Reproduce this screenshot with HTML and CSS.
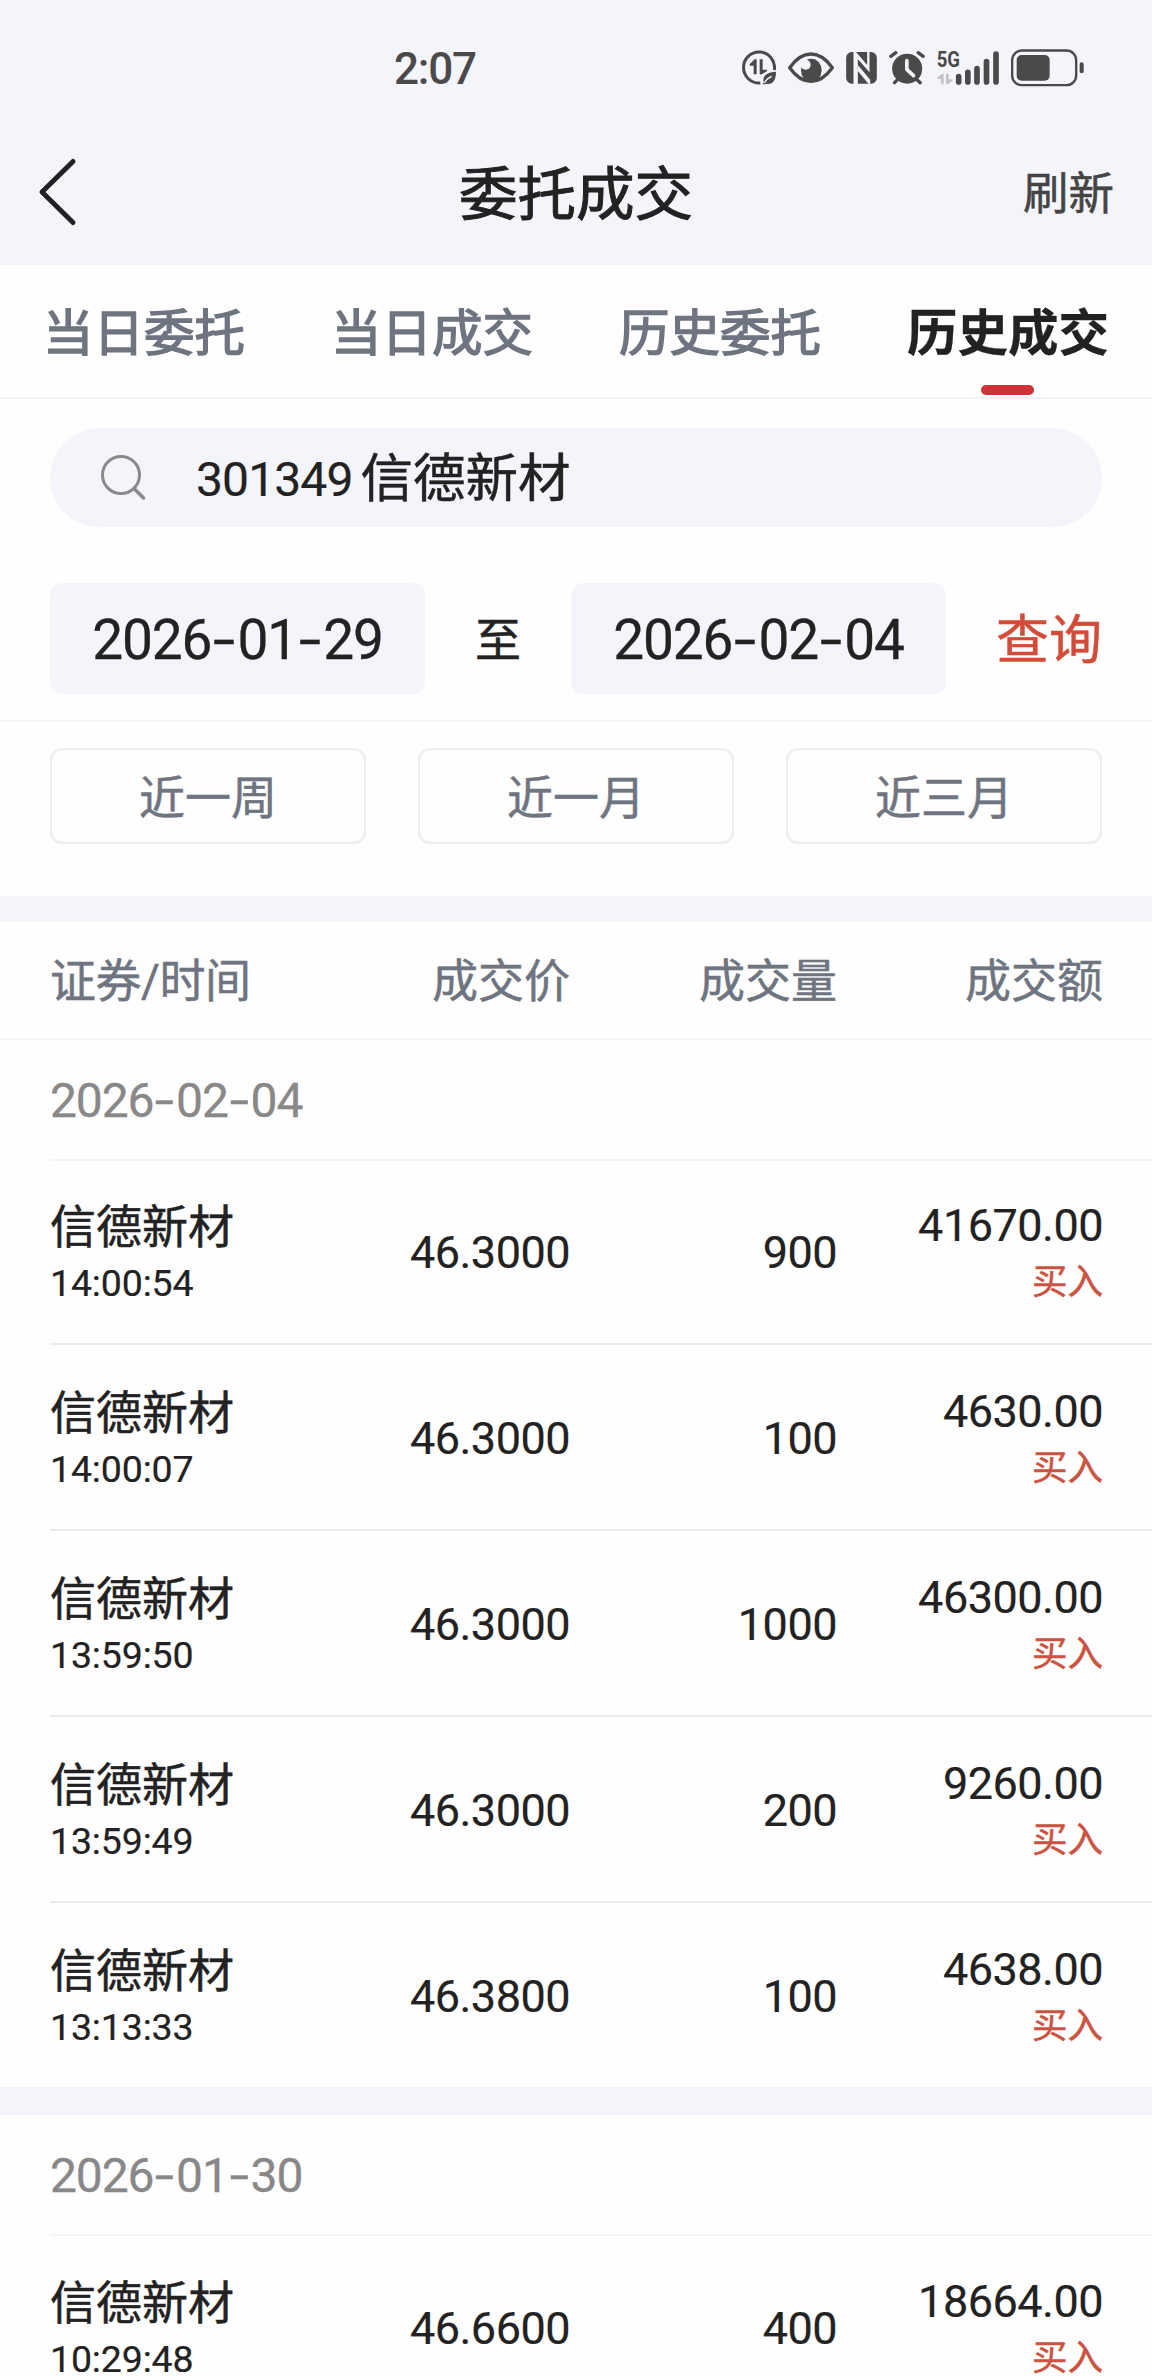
FILE: index.html
```html
<!DOCTYPE html>
<html lang="zh-CN">
<head>
<meta charset="utf-8">
<title>委托成交</title>
<link rel="stylesheet" href="styles.css">
</head>
<body>
<div class="page">
  <header class="top">
    <div class="status">
      <span class="clock">2:07</span>
      <div class="status-icons">
        <svg width="34" height="42" viewBox="66 50 102 126">
          <path d="M163 119A46.500 46.500 0 1 0 121 158" fill="none" stroke="#4a4a4a" stroke-width="9"/>
          <path d="M110 87V132H101V106H89V102L104 87zM119 87H128V118H141V122L126 132H119z" fill="#4a4a4a"/>
          <path d="M168 124c-24 1-38 10-38 25 0 3 1 5 2 7l-5 6h8l3-2c18 4 30-7 30-36z" fill="#4a4a4a"/>
          <path d="M133 158c6-11 13-16 22-20" fill="none" stroke="#f4f5fa" stroke-width="4"/>
        </svg>
        <svg class="eye" width="46" height="42" viewBox="204 50 138 126">
          <path d="M209 112C229 84 250 71 273 71s44 13 64 41c-20 28-41 41-64 41s-44-13-64-41z" fill="none" stroke="#4a4a4a" stroke-width="10" stroke-linejoin="round"/>
          <ellipse cx="274" cy="120" rx="31" ry="35" fill="#4a4a4a"/>
          <circle cx="257" cy="103" r="15" fill="#f4f5fa"/>
        </svg>
        <svg class="nfc" width="31" height="42" viewBox="378 50 92 126">
          <rect x="378" y="65" width="92" height="95" rx="17" fill="#4a4a4a"/>
          <path d="M397 62H405L441 104V62H448V126L413 86V161H400V64z" fill="#f4f5fa"/>
          <path d="M413 104L450 148V162H446L413 122z" fill="#f4f5fa"/>
        </svg>
        <svg class="alarm" width="36" height="42" viewBox="507 50 107 126">
          <circle cx="561" cy="115" r="45" fill="#4a4a4a"/>
          <path d="M512 78L527 67M594 67L609 78M523 157L533 147M589 147L600 157" stroke="#4a4a4a" stroke-width="10" stroke-linecap="round"/>
          <path d="M560 91V117L580 136" fill="none" stroke="#f4f5fa" stroke-width="11" stroke-linecap="round" stroke-linejoin="round"/>
        </svg>
        <svg class="signal" width="62" height="42" viewBox="651 50 186 126">
          <text x="650" y="111" class="net" textLength="70" lengthAdjust="spacingAndGlyphs">5G</text>
          <path d="M671 130V162H663V146H652V142L666 130zM678 130H686V147H697V151L684 162H678z" fill="#c2c3c7"/>
          <path d="M716 139V155M743.500 126V155M771 115V155M799.500 94V155M828 71V155" stroke="#4a4a4a" stroke-width="17" stroke-linecap="round"/>
        </svg>
        <svg class="battery" width="73" height="42" viewBox="873 50 219 126">
          <rect x="876.500" y="60.500" width="192" height="104" rx="29" fill="none" stroke="#4a4a4a" stroke-width="7"/>
          <rect x="890" y="74" width="99" height="77" rx="15" fill="#4a4a4a"/>
          <path d="M1085 102V123" stroke="#4a4a4a" stroke-width="12" stroke-linecap="round"/>
        </svg>
      </div>
    </div>
    <div class="nav">
      <svg class="back" width="42" height="72" viewBox="0 0 42 72"><path d="M37 5.500L6 36L37 66.500" fill="none" stroke="#222" stroke-width="5" stroke-linecap="round" stroke-linejoin="round"/></svg>
      <h1 class="title">委托成交</h1>
      <span class="refresh">刷新</span>
    </div>
  </header>

  <nav class="tabs">
    <span class="tab">当日委托</span>
    <span class="tab">当日成交</span>
    <span class="tab">历史委托</span>
    <span class="tab active">历史成交</span>
  </nav>

  <div class="filters">
    <div class="search">
      <svg width="48" height="48" viewBox="0 0 48 48"><circle cx="22" cy="22" r="18.500" fill="none" stroke="#8a8a8a" stroke-width="3"/><path d="M35 35.500L44.500 45" stroke="#8a8a8a" stroke-width="3.500" stroke-linecap="round"/></svg>
      <span class="code">301349</span><span class="name">信德新材</span>
    </div>
    <div class="range">
      <span class="date">2026<i>-</i>01<i>-</i>29</span>
      <span class="to">至</span>
      <span class="date">2026<i>-</i>02<i>-</i>04</span>
      <span class="query">查询</span>
    </div>
  </div>

  <div class="quick">
    <span class="chip">近一周</span>
    <span class="chip">近一月</span>
    <span class="chip">近三月</span>
  </div>

  <div class="columns cells">
    <span class="first">证券/时间</span><span>成交价</span><span>成交量</span><span>成交额</span>
  </div>

  <section class="group">
    <h2 class="day">2026<i>-</i>02<i>-</i>04</h2>
    <div class="row cells">
      <div class="first"><span class="stock">信德新材</span><span class="time">14:00:54</span></div>
      <span class="num">46.3000</span><span class="num">900</span>
      <div class="last"><span class="amount">41670.00</span><span class="side">买入</span></div>
    </div>
    <div class="row cells">
      <div class="first"><span class="stock">信德新材</span><span class="time">14:00:07</span></div>
      <span class="num">46.3000</span><span class="num">100</span>
      <div class="last"><span class="amount">4630.00</span><span class="side">买入</span></div>
    </div>
    <div class="row cells">
      <div class="first"><span class="stock">信德新材</span><span class="time">13:59:50</span></div>
      <span class="num">46.3000</span><span class="num">1000</span>
      <div class="last"><span class="amount">46300.00</span><span class="side">买入</span></div>
    </div>
    <div class="row cells">
      <div class="first"><span class="stock">信德新材</span><span class="time">13:59:49</span></div>
      <span class="num">46.3000</span><span class="num">200</span>
      <div class="last"><span class="amount">9260.00</span><span class="side">买入</span></div>
    </div>
    <div class="row cells">
      <div class="first"><span class="stock">信德新材</span><span class="time">13:13:33</span></div>
      <span class="num">46.3800</span><span class="num">100</span>
      <div class="last"><span class="amount">4638.00</span><span class="side">买入</span></div>
    </div>
  </section>

  <section class="group">
    <h2 class="day">2026<i>-</i>01<i>-</i>30</h2>
    <div class="row cells">
      <div class="first"><span class="stock">信德新材</span><span class="time">10:29:48</span></div>
      <span class="num">46.6600</span><span class="num">400</span>
      <div class="last"><span class="amount">18664.00</span><span class="side">买入</span></div>
    </div>
  </section>
</div>
</body>
</html>
```
FILE: styles.css
```css
* { box-sizing: border-box; }
body {
  margin: 0;
  background: #fefefe;
  color: #222;
  font-family: Roboto, "Noto Sans CJK SC", sans-serif;
  -webkit-text-stroke: 0.500px;
}
i { font-style: normal; }
h1, h2 { margin: 0; font-weight: 400; }
svg { display: block; flex: none; }
.page {
  width: 1152px;
  height: 2376px;
  overflow: hidden;
}

/* status bar and title */
.top { height: 265px; background: #f4f5fa; }
.status {
  height: 136px;
  padding: 0 68px 0 394px;
  display: flex;
  align-items: center;
  justify-content: space-between;
}
.clock {
  padding-top: 2px;
  font-size: 44px;
  line-height: 54px;
  letter-spacing: -1.200px;
  font-weight: 500;
  color: #4a4a4a;
  -webkit-text-stroke: 0;
}
.status-icons { display: flex; align-items: center; }
.eye, .nfc, .alarm, .signal, .battery { margin-left: 12px; }
.net { font-size: 66px; font-weight: 700; fill: #4a4a4a; -webkit-text-stroke: 0; }
.nav {
  height: 112px;
  padding: 0 38px 0 36px;
  display: grid;
  grid-template-columns: 1fr auto 1fr;
  align-items: center;
}
.title { margin-left: 2px; font-size: 58.500px; line-height: 80px; padding-top: 6px; -webkit-text-stroke: 1px; }
.refresh { justify-self: end; font-size: 45.500px; line-height: 60px; color: #444; padding-top: 6px; }

/* tabs */
.tabs {
  height: 134px;
  display: grid;
  grid-template-columns: repeat(4, 1fr);
  border-bottom: 2px solid #f2f2f3;
}
.tab {
  position: relative;
  text-align: center;
  font-size: 50.500px;
  line-height: 138px;
  color: #6e7480;
  -webkit-text-stroke: 1.400px;
}
.tab.active { color: #222; font-weight: 700; -webkit-text-stroke: 0.300px; }
.tab.active::after {
  content: "";
  position: absolute;
  left: 50%;
  top: 120px;
  width: 53px;
  height: 10px;
  margin-left: -27px;
  border-radius: 5px;
  background: #cf3236;
}

/* search and date range */
.filters {
  height: 323px;
  padding: 29px 50px 0;
  border-bottom: 2px solid #f4f4f5;
}
.search {
  height: 99px;
  padding-left: 49px;
  border-radius: 50px;
  background: #f4f5fa;
  display: flex;
  align-items: center;
}
.search svg { margin-top: -2px; }
.search .code { margin-left: 49px; font-size: 48px; letter-spacing: -0.900px; padding-top: 4px; -webkit-text-stroke: 0.200px; }
.search .name { margin-left: 8px; padding-top: 2px; font-size: 52.500px; line-height: 70px; }
.range {
  margin-top: 56px;
  display: grid;
  grid-template-columns: 375px 146px 375px 1fr;
  align-items: center;
}
.date {
  height: 111px;
  border-radius: 12px;
  background: #f4f5fa;
  text-align: center;
  font-size: 55px;
  line-height: 115px;
  letter-spacing: -1.100px;
  -webkit-text-stroke: 0.300px;
}
.date i, .day i {
  display: inline-block;
  width: 0.475em;
  text-align: center;
  letter-spacing: 0;
  transform: scaleX(1.450);
}
.to { text-align: center; font-size: 46px; line-height: 60px; padding-top: 2px; }
.query { margin-left: -10px; padding-top: 4px; text-align: right; font-size: 53px; line-height: 70px; color: #d44b38; }

.quick {
  height: 200px;
  padding: 26px 50px 0;
  display: grid;
  grid-template-columns: repeat(3, 1fr);
  column-gap: 52px;
  border-bottom: 26px solid #f4f5fa;
}
.chip {
  height: 96px;
  border: 2px solid #ebecee;
  border-radius: 12px;
  text-align: center;
  font-size: 46px;
  line-height: 97px;
  color: #6e7480;
}

/* trade table */
.cells {
  display: grid;
  grid-template-columns: 253px 267px 267px 266px;
  align-items: center;
  text-align: right;
}
.first { text-align: left; }
.columns {
  height: 118px;
  padding-left: 50px;
  border-bottom: 2px solid #f4f4f5;
  font-size: 46px;
  line-height: 118px;
  color: #6e7480;
}
.columns .first { letter-spacing: -0.500px; }
.group + .group { border-top: 28px solid #f4f5fa; }
.day {
  height: 121px;
  margin-left: 50px;
  border-bottom: 2px solid #f4f5f6;
  font-size: 48px;
  line-height: 121px;
  letter-spacing: -1.150px;
  color: #888;
  -webkit-text-stroke: 0.300px;
}
.row {
  height: 186px;
  margin-left: 50px;
  padding-top: 4px;
  border-bottom: 2px solid #eaebed;
}
.day + .row { height: 184px; padding-top: 2px; }
.row:last-child { height: 184px; border-bottom: 0; }
.first, .last { display: flex; flex-direction: column; }
.row .first, .last { margin-top: -2px; }
.stock { font-size: 46px; line-height: 62px; }
.time { font-size: 37.500px; line-height: 50px; letter-spacing: -0.150px; }
.num, .amount { font-size: 45px; line-height: 60px; letter-spacing: -0.500px; }
.num, .amount, .time { -webkit-text-stroke: 0.200px; }
.side { font-size: 35.500px; line-height: 52px; color: #ca5341; }
```
